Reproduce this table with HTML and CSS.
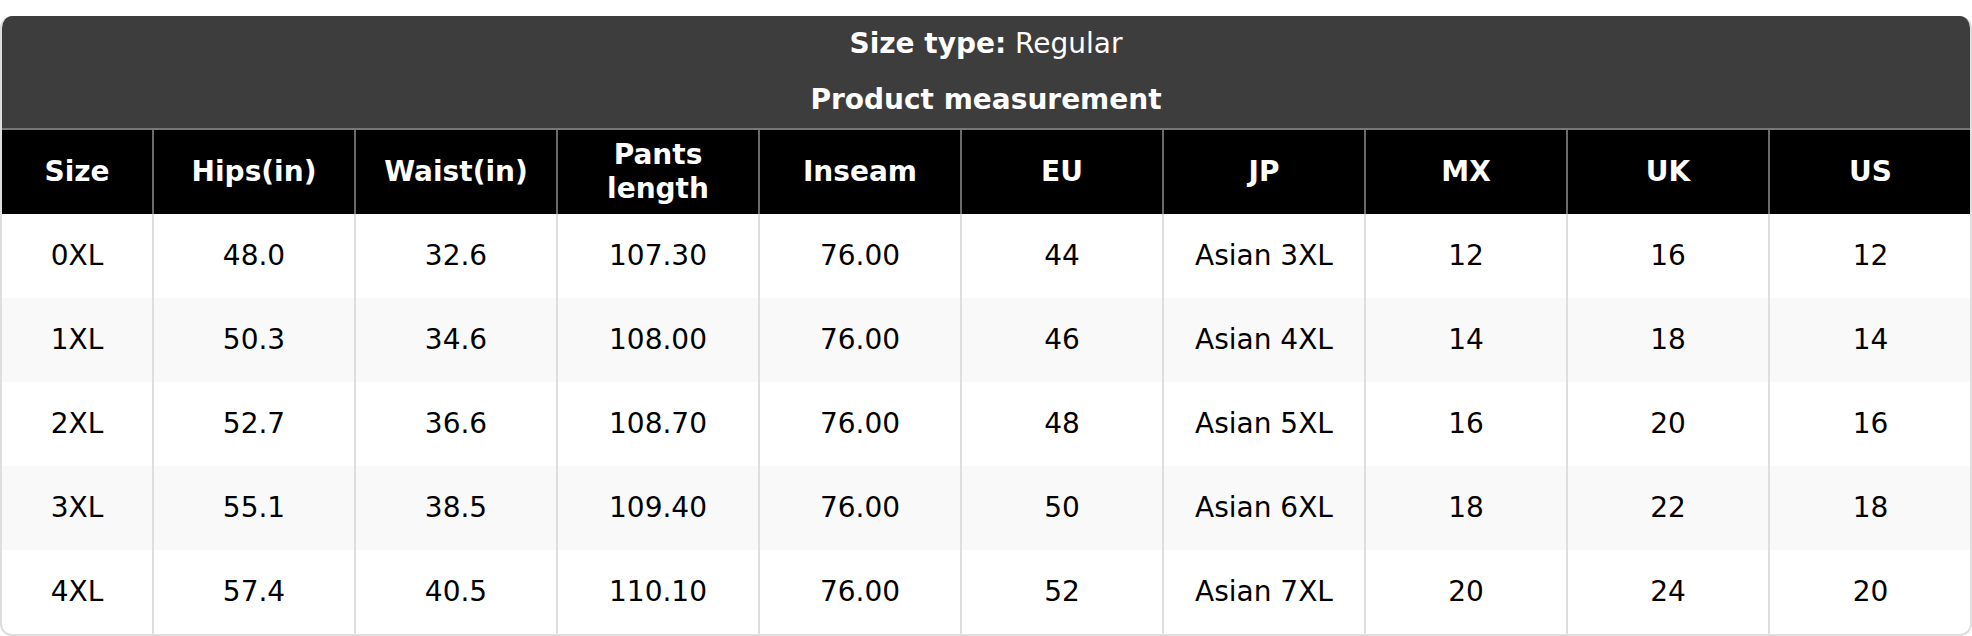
FILE: index.html
```html
<!DOCTYPE html>
<html>
<head>
<meta charset="utf-8">
<link rel="stylesheet" href="styles.css">
</head>
<body>
<div class="card">
  <div class="title-row"><b>Size type:</b> Regular</div>
  <div class="title-row"><b>Product measurement</b></div>
  <table class="sizes">
    <colgroup>
      <col class="c-first">
      <col><col><col><col><col><col><col><col><col>
    </colgroup>
    <thead>
      <tr>
        <th>Size</th><th>Hips(in)</th><th>Waist(in)</th><th>Pants<br>length</th><th>Inseam</th><th>EU</th><th>JP</th><th>MX</th><th>UK</th><th>US</th>
      </tr>
    </thead>
    <tbody>
      <tr><td>0XL</td><td>48.0</td><td>32.6</td><td>107.30</td><td>76.00</td><td>44</td><td>Asian 3XL</td><td>12</td><td>16</td><td>12</td></tr>
      <tr><td>1XL</td><td>50.3</td><td>34.6</td><td>108.00</td><td>76.00</td><td>46</td><td>Asian 4XL</td><td>14</td><td>18</td><td>14</td></tr>
      <tr><td>2XL</td><td>52.7</td><td>36.6</td><td>108.70</td><td>76.00</td><td>48</td><td>Asian 5XL</td><td>16</td><td>20</td><td>16</td></tr>
      <tr><td>3XL</td><td>55.1</td><td>38.5</td><td>109.40</td><td>76.00</td><td>50</td><td>Asian 6XL</td><td>18</td><td>22</td><td>18</td></tr>
      <tr><td>4XL</td><td>57.4</td><td>40.5</td><td>110.10</td><td>76.00</td><td>52</td><td>Asian 7XL</td><td>20</td><td>24</td><td>20</td></tr>
    </tbody>
  </table>
</div>
</body>
</html>
```

FILE: styles.css
```css
html, body {
  margin: 0;
  padding: 0;
  background: #ffffff;
}
body {
  padding-top: 16px;
  font-family: "DejaVu Sans", Verdana, sans-serif;
  font-size: 28px;
  color: #000;
}
.card {
  width: 1972px;
  box-sizing: border-box;
  border: 2px solid #dedede;
  border-top: none;
  border-radius: 12px;
  overflow: hidden;
}
.title-row {
  background: #3d3d3d;
  color: #fff;
  height: 56px;
  line-height: 56px;
  text-align: center;
  font-size: 28px;
}
.title-row b {
  font-weight: bold;
}
.sizes {
  width: 100%;
  table-layout: fixed;
  border-collapse: collapse;
}
.sizes col {
  width: 202px;
}
.sizes col.c-first {
  width: 151px;
}
.sizes th {
  background: #000;
  color: #fff;
  font-weight: bold;
  height: 85px;
  box-sizing: border-box;
  line-height: 34px;
  padding: 0 4px;
  text-align: center;
  border-top: 2px solid #777;
  border-left: 2px solid #6a6a6a;
}
.sizes th:first-child,
.sizes td:first-child {
  border-left: none;
}
.sizes td {
  height: 84px;
  box-sizing: border-box;
  padding: 0 4px;
  line-height: 34px;
  text-align: center;
  border-left: 2px solid #dedede;
}
.sizes tbody tr:nth-child(even) td {
  background: #f9f9f9;
}
```
